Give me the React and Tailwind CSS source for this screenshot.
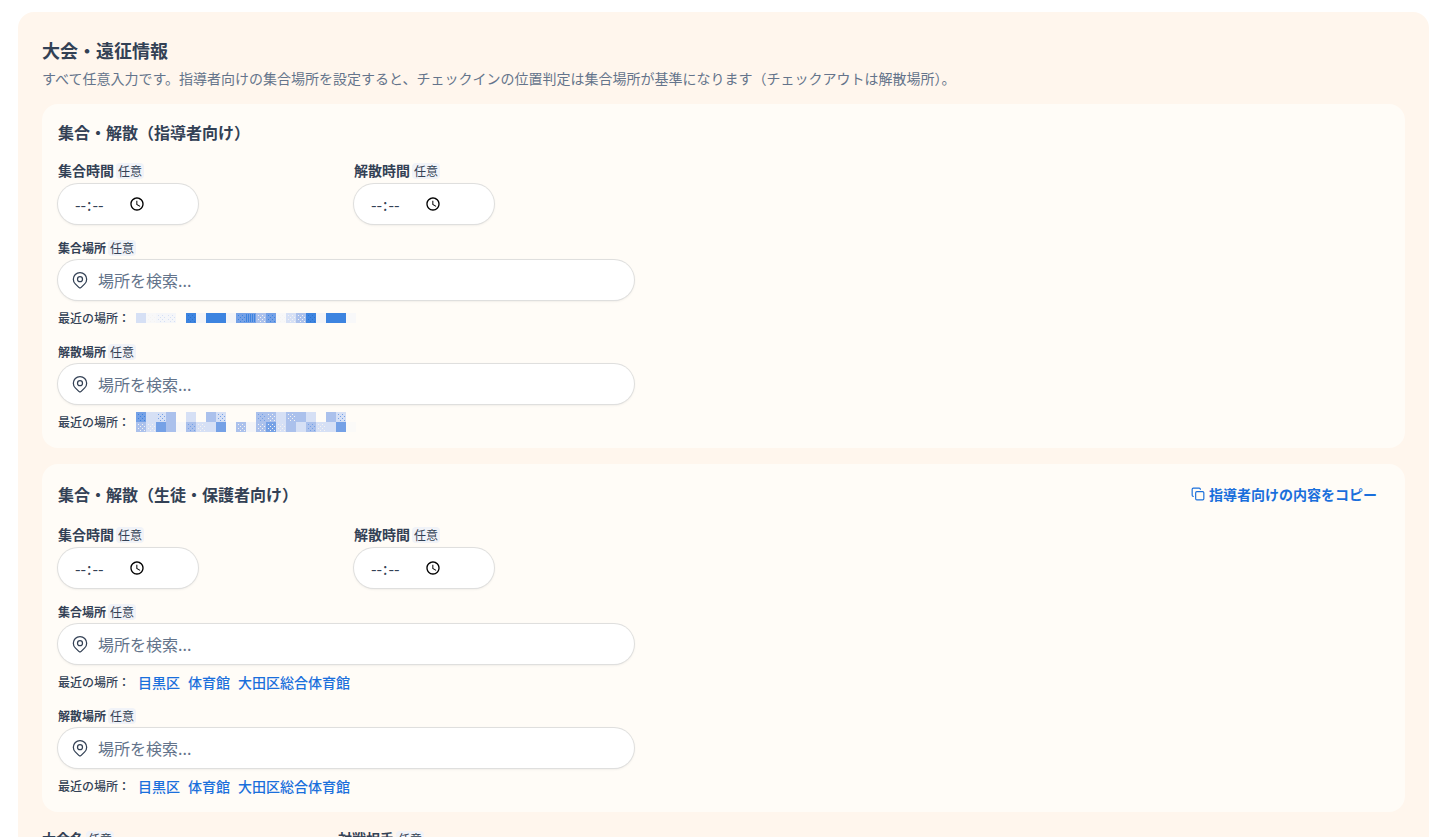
import React from 'react'
import { Copy } from 'lucide-react'
import { TbMapPin } from 'react-icons/tb'

const recentPlaces = ['目黒区', '体育館', '大田区総合体育館'];

// Each cell is [column, row, fill, speckle]
const hiddenPlacesSmall = [
  [0, 0, '#d6e0f5'], [1, 0, '#f8f8f9', 'light'], [2, 0, '#f5f6f9', 'pale'], [3, 0, '#f5f6f9', 'pale'],
  [5, 0, '#3d84e0', 'deep'], [6, 0, '#f3f4f8'], [7, 0, '#3d84e0'], [8, 0, '#3d84e0'], [9, 0, '#f3f4f8'],
  [10, 0, '#75a1e6', 'strong'], [11, 0, '#75a1e6', 'bars'], [12, 0, '#abc1ec', 'light'], [13, 0, '#75a1e6', 'strong'],
  [14, 0, '#f8f8f9', 'light'], [15, 0, '#d6e0f5', 'light'], [16, 0, '#abc1ec', 'light'], [17, 0, '#3d84e0', 'deep'],
  [18, 0, '#f3f4f8'], [19, 0, '#3d84e0'], [20, 0, '#3d84e0'], [21, 0, '#f8f8f9'],
];

const hiddenPlacesTall = [
  [0, 0, '#75a1e6', 'strong'], [1, 0, '#d6e0f5'], [2, 0, '#d6e0f5', 'mid'], [3, 0, '#abc1ec'],
  [5, 0, '#d6e0f5'], [7, 0, '#abc1ec'], [8, 0, '#d6e0f5', 'mid'],
  [12, 0, '#abc1ec', 'mid'], [13, 0, '#abc1ec', 'light'], [14, 0, '#d6e0f5'], [15, 0, '#abc1ec', 'light'],
  [16, 0, '#abc1ec'], [17, 0, '#d6e0f5'], [19, 0, '#abc1ec'], [20, 0, '#d6e0f5', 'mid'],
  [0, 1, '#abc1ec', 'light'], [1, 1, '#d6e0f5', 'light'], [2, 1, '#75a1e6', 'mid'], [3, 1, '#abc1ec'],
  [4, 1, '#f8f8f9'], [5, 1, '#abc1ec', 'mid'], [6, 1, '#d6e0f5', 'light'], [7, 1, '#d6e0f5'], [8, 1, '#75a1e6'],
  [9, 1, '#fbfaf8'], [10, 1, '#abc1ec', 'light'], [11, 1, '#f3f4f8'],
  [12, 1, '#abc1ec', 'light'], [13, 1, '#75a1e6', 'light'], [14, 1, '#d6e0f5', 'light'], [15, 1, '#abc1ec'],
  [16, 1, '#d6e0f5'], [17, 1, '#abc1ec', 'mid'], [18, 1, '#d6e0f5', 'light'], [19, 1, '#d6e0f5'], [20, 1, '#75a1e6'],
  [21, 1, '#fbfaf8'],
];

const speckles = { light: '#f5f3f2', pale: '#d6e0f5', mid: '#75a1e6', strong: '#3d84e0', deep: '#2f72cc' };

function Mosaic({ id, cells, rows }) {
  return (
    <svg width="220" height={rows * 10} viewBox={`0 0 220 ${rows * 10}`} shapeRendering="crispEdges" role="img" aria-label="非表示の場所">
      <defs>
        {Object.entries(speckles).map(([name, color]) => (
          <pattern key={name} id={`${id}-${name}`} width="10" height="10" patternUnits="userSpaceOnUse">
            <path d="M2 2h1v1H2zM6 2h1v1H6zM4 4h1v1H4zM8 4h1v1H8zM2 6h1v1H2zM6 6h1v1H6zM4 8h1v1H4zM8 8h1v1H8z" fill={color} />
          </pattern>
        ))}
        <pattern id={`${id}-bars`} width="2" height="10" patternUnits="userSpaceOnUse">
          <path d="M0 1h1v8H0z" fill="#3d84e0" />
        </pattern>
      </defs>
      {cells.map(([col, row, fill, speckle]) => (
        <g key={`${col}-${row}`}>
          <rect x={col * 10} y={row * 10} width="10" height="10" fill={fill} />
          {speckle && <rect x={col * 10} y={row * 10} width="10" height="10" fill={`url(#${id}-${speckle})`} />}
        </g>
      ))}
    </svg>
  )
}

function Badge() {
  return <span className="rounded bg-[#f1f3f8] px-0.5 text-xs font-normal leading-4">任意</span>
}

function Label({ htmlFor, children }) {
  return (
    <label htmlFor={htmlFor} className="mb-1 flex h-5 items-baseline gap-0.5 text-sm font-bold">
      {children}
      <Badge />
    </label>
  )
}

function SmallLabel({ htmlFor, children }) {
  return (
    <label htmlFor={htmlFor} className="flex h-6 items-center gap-0.5 text-xs font-bold">
      {children}
      <Badge />
    </label>
  )
}

function TimeField({ id, label }) {
  return (
    <div>
      <Label htmlFor={id}>{label}</Label>
      <input
        id={id}
        type="time"
        className="block h-10 w-[140px] rounded-full bg-white px-4 text-base shadow-sm ring-1 ring-[#dfdfde] outline-none [&::-webkit-datetime-edit-ampm-field]:hidden [&::-webkit-calendar-picker-indicator]:ml-0 [&::-webkit-calendar-picker-indicator]:mr-[33px]"
      />
    </div>
  )
}

function PlaceField({ id, label, children }) {
  return (
    <div className="mt-3 max-w-xl">
      <SmallLabel htmlFor={id}>{label}</SmallLabel>
      <div className="flex h-10 items-center gap-2 rounded-full bg-white px-3 shadow-sm ring-1 ring-[#dfdfde]">
        <TbMapPin className="h-5 w-5 shrink-0 stroke-[1.5]" />
        <input id={id} type="text" placeholder="場所を検索..." className="w-full text-base outline-none placeholder:text-[#64748b]" />
      </div>
      <div className="mt-2 flex h-5 items-center">
        <span className="w-[78px] text-xs font-medium">最近の場所：</span>
        {children}
      </div>
    </div>
  )
}

function RecentLinks() {
  return (
    <div className="flex gap-2 pl-0.5 text-sm font-medium text-[#1a6fdc]">
      {recentPlaces.map((place) => (
        <button key={place} type="button">{place}</button>
      ))}
    </div>
  )
}

function MeetingCard({ id, title, action, recentMeet, recentLeave }) {
  return (
    <section className="mt-4 rounded-2xl bg-[#fffcf7] p-4">
      <div className="flex items-center justify-between">
        <h3 className="text-base font-bold">{title}</h3>
        {action}
      </div>
      <div className="mt-4 grid max-w-xl grid-cols-2 gap-4">
        <TimeField id={`${id}-meet-time`} label="集合時間" />
        <TimeField id={`${id}-leave-time`} label="解散時間" />
      </div>
      <PlaceField id={`${id}-meet-place`} label="集合場所">{recentMeet}</PlaceField>
      <PlaceField id={`${id}-leave-place`} label="解散場所">{recentLeave}</PlaceField>
    </section>
  )
}

export default function App() {
  return (
    <div lang="ja" className="h-screen overflow-hidden bg-white font-['Noto_Sans_CJK_JP',sans-serif] text-[#334155]">
      <main className="mt-3 mr-5 ml-[18px] rounded-2xl bg-[#fff6ed] p-6">
        <h2 className="text-lg font-bold">大会・遠征情報</h2>
        <p className="mt-1 text-sm text-[#64748b]">
          すべて任意入力です。指導者向けの集合場所を設定すると、チェックインの位置判定は集合場所が基準になります（チェックアウトは解散場所）。
        </p>

        <MeetingCard
          id="coach"
          title="集合・解散（指導者向け）"
          recentMeet={<Mosaic id="meet" cells={hiddenPlacesSmall} rows={1} />}
          recentLeave={<Mosaic id="leave" cells={hiddenPlacesTall} rows={2} />}
        />
        <MeetingCard
          id="student"
          title="集合・解散（生徒・保護者向け）"
          action={
            <button type="button" className="flex items-center gap-1 px-3 py-1 text-sm font-bold text-[#1a6fdc]">
              <Copy className="h-3.5 w-3.5" />
              指導者向けの内容をコピー
            </button>
          }
          recentMeet={<RecentLinks />}
          recentLeave={<RecentLinks />}
        />

        <div className="mt-4 grid max-w-xl grid-cols-2 gap-4">
          <div>
            <Label htmlFor="event-name">大会名</Label>
            <input id="event-name" type="text" className="block h-10 w-full rounded-full bg-white px-4 shadow-sm ring-1 ring-[#dfdfde] outline-none" />
          </div>
          <div>
            <Label htmlFor="opponent">対戦相手</Label>
            <input id="opponent" type="text" className="block h-10 w-full rounded-full bg-white px-4 shadow-sm ring-1 ring-[#dfdfde] outline-none" />
          </div>
        </div>
      </main>
    </div>
  )
}
